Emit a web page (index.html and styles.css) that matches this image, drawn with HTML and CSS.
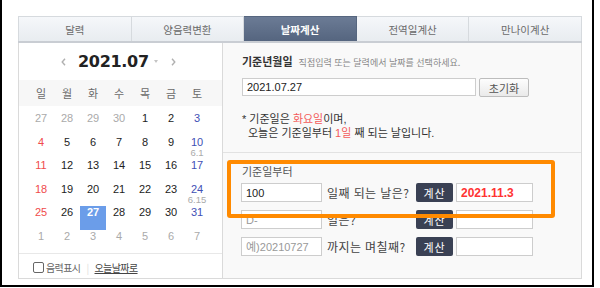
FILE: index.html
```html
<!DOCTYPE html>
<html lang="ko">
<head>
<meta charset="utf-8">
<title>날짜계산</title>
<link rel="stylesheet" href="styles.css">
</head>
<body>
<div class="frame">
  <div class="widget">
    <ul class="tabs">
      <li class="tab">달력</li>
      <li class="tab">양음력변환</li>
      <li class="tab active">날짜계산</li>
      <li class="tab">전역일계산</li>
      <li class="tab">만나이계산</li>
    </ul>
    <div class="body">
      <div class="cal">
        <div class="cal-head">
          <svg class="arrow" width="5" height="8" viewBox="0 0 5 8"><path d="M4 0.8 L1.2 4 L4 7.2" fill="none" stroke="#b0b0b0" stroke-width="1.4"/></svg>
          <span class="ym">2021.07</span>
          <svg class="caret" width="4" height="3" viewBox="0 0 4 3"><path d="M0 0 H4 L2 3 Z" fill="#c4c4c4"/></svg>
          <svg class="arrow" width="5" height="8" viewBox="0 0 5 8"><path d="M1 0.8 L3.8 4 L1 7.2" fill="none" stroke="#b0b0b0" stroke-width="1.4"/></svg>
        </div>
        <div class="weekdays">
          <span>일</span><span>월</span><span>화</span><span>수</span><span>목</span><span>금</span><span>토</span>
        </div>
        <div class="dates">
          <div class="d other">27</div><div class="d other">28</div><div class="d other">29</div><div class="d other">30</div><div class="d">1</div><div class="d">2</div><div class="d sat">3</div>
          <div class="d sun">4</div><div class="d">5</div><div class="d">6</div><div class="d">7</div><div class="d">8</div><div class="d">9</div><div class="d sat">10<small>6.1</small></div>
          <div class="d sun">11</div><div class="d">12</div><div class="d">13</div><div class="d">14</div><div class="d">15</div><div class="d">16</div><div class="d sat">17</div>
          <div class="d sun">18</div><div class="d">19</div><div class="d">20</div><div class="d">21</div><div class="d">22</div><div class="d">23</div><div class="d sat">24<small>6.15</small></div>
          <div class="d sun">25</div><div class="d">26</div><div class="d sel">27</div><div class="d">28</div><div class="d">29</div><div class="d">30</div><div class="d sat">31</div>
          <div class="d other">1</div><div class="d other">2</div><div class="d other">3</div><div class="d other">4</div><div class="d other">5</div><div class="d other">6</div><div class="d other">7</div>
        </div>
        <div class="cal-foot">
          <span class="check"></span><span class="lunar">음력표시</span>
          <span class="sep">|</span>
          <span class="today">오늘날짜로</span>
        </div>
      </div>
      <div class="calc">
        <div class="base">
          <div class="base-title"><strong>기준년월일</strong><span class="hint">직접입력 또는 달력에서 날짜를 선택하세요.</span></div>
          <div class="base-row">
            <input class="date-input" type="text" value="2021.07.27">
            <button class="btn-reset" type="button">초기화</button>
          </div>
          <p class="note">
            <span class="line">* 기준일은 <em>화요일</em>이며,</span>
            <span class="line indent">오늘은 기준일부터 <em>1일</em> 째 되는 날입니다.</span>
          </p>
        </div>
        <div class="calc-rows">
          <div class="calc-label">기준일부터</div>
          <div class="calc-row">
            <input class="num" type="text" value="100">
            <span class="txt">일째 되는 날은?</span>
            <button class="btn-calc" type="button">계산</button>
            <input class="result hit" type="text" value="2021.11.3">
          </div>
          <div class="calc-row">
            <input class="num" type="text" placeholder="D-">
            <span class="txt">일은?</span>
            <button class="btn-calc" type="button">계산</button>
            <input class="result" type="text">
          </div>
          <div class="calc-row">
            <input class="num" type="text" placeholder="예)20210727">
            <span class="txt">까지는 며칠째?</span>
            <button class="btn-calc" type="button">계산</button>
            <input class="result" type="text">
          </div>
        </div>
        <div class="highlight"></div>
      </div>
    </div>
  </div>
</div>
</body>
</html>
```
FILE: styles.css
```css
* { box-sizing: border-box; }

body {
  margin: 0;
  background: #fff;
  font-family: "Noto Sans CJK KR", "Liberation Sans", sans-serif;
  color: #333;
}

.frame {
  width: 594px;
  height: 287px;
  border: 2px solid #000;
  border-top: 0;
  padding: 16px 0 0 16px;
}

.widget {
  width: 564px;
}

/* tabs */
.tabs {
  display: flex;
  margin: 0;
  padding: 0;
  list-style: none;
  height: 27px;
  border-bottom: 2px solid #c9cdd3;
}

.tab {
  flex: 1;
  border-top: 1px solid #d6dade;
  border-right: 1px solid #d6dade;
  background: linear-gradient(#f5f7fa, #e8ecf0);
  text-align: center;
  font-size: 10.5px;
  line-height: 25px;
  color: #6a6a6a;
}

.tab:first-child {
  border-left: 1px solid #d6dade;
}

.tab.active {
  background: linear-gradient(#6b7b95, #55657f);
  border-color: #56667f;
  color: #fff;
  font-weight: bold;
}

.body {
  display: flex;
  height: 236px;
  border-bottom: 1px solid #dadada;
}

/* calendar */
.cal {
  width: 205px;
  border-left: 1px solid #dadada;
  border-right: 1px solid #dadada;
  background: #fff;
  display: flex;
  flex-direction: column;
}

.cal-head {
  height: 37px;
  display: flex;
  align-items: center;
  padding-left: 42px;
}

.ym {
  font-family: "DejaVu Sans", "Liberation Sans", sans-serif;
  font-weight: bold;
  font-size: 16px;
  letter-spacing: -0.3px;
  color: #222;
  margin: 0 5px 0 12px;
}

.caret {
  margin-right: 13px;
}

.weekdays {
  display: grid;
  grid-template-columns: repeat(7, 1fr);
  align-items: center;
  height: 26px;
  background: #f7f7f7;
  padding: 0 12px 0 9px;
  font-size: 11px;
  color: #6a6a6a;
  text-align: center;
}

.dates {
  display: grid;
  grid-template-columns: repeat(7, 1fr);
  grid-auto-rows: 23.5px;
  padding: 6px 12px 0 9px;
}

.d {
  font-family: "Liberation Sans", sans-serif;
  font-size: 11px;
  line-height: 12px;
  text-align: center;
  color: #222;
}

.d small {
  display: block;
  font-size: 9.5px;
  line-height: 10px;
  color: #aaa;
}

.d.sun { color: #f04b4b; }
.d.sat { color: #4150b5; }
.d.other { color: #aaa; }

.d.sel {
  background: #6b9de9;
  color: #fff;
  font-weight: bold;
}

.cal-foot {
  flex: 1;
  border-top: 1px solid #e8e8e8;
  display: flex;
  align-items: center;
  padding: 2px 0 0 14px;
  font-size: 10px;
  letter-spacing: -0.6px;
  color: #666;
}

.check {
  width: 11px;
  height: 11px;
  border: 1px solid #666;
  border-radius: 2px;
  background: #fff;
  margin-right: 2px;
}

.sep {
  color: #ddd;
  margin: 0 6px 0 6px;
}

.today {
  color: #444;
  text-decoration: underline;
}

/* calculator */
.calc {
  flex: 1;
  position: relative;
  background: #f9f9f9;
  border-right: 1px solid #dadada;
}

.base {
  height: 110px;
  padding: 11px 0 0 19px;
  border-bottom: 1px solid #e2e2e2;
}

.base-title {
  line-height: 14px;
  display: flex;
  align-items: baseline;
}

.base-title strong {
  font-size: 11px;
  color: #333;
}

.hint {
  margin-left: 6px;
  font-size: 9px;
  color: #888;
}

.base-row {
  margin-top: 8px;
  display: flex;
}

input {
  font-family: "Liberation Sans", "Noto Sans CJK KR", sans-serif;
  font-size: 11px;
  color: #222;
  border: 1px solid #cdcdcd;
  background: #fff;
  padding: 0 4px;
  margin: 0;
  outline: none;
}

input::placeholder {
  color: #999;
}

.date-input {
  width: 234px;
  height: 18px;
}

button {
  font-family: "Noto Sans CJK KR", sans-serif;
  padding: 0;
  margin: 0;
}

.btn-reset {
  margin-left: 3px;
  width: 50px;
  height: 19px;
  border: 1px solid #bdbdbd;
  border-radius: 2px;
  background: linear-gradient(#fdfdfd, #eaeaea);
  font-size: 11px;
  color: #555;
}

.note {
  margin: 15px 0 0;
  font-family: "Liberation Sans", "Noto Sans CJK KR", sans-serif;
  font-size: 11px;
  line-height: 14px;
  color: #333;
}

.note .line {
  display: block;
  height: 14px;
}

.note .indent {
  padding-left: 6px;
}

.note em {
  font-style: normal;
  color: #f45b5b;
}

.calc-rows {
  padding: 12px 0 0 18px;
}

.calc-label {
  padding-left: 1px;
  font-size: 11px;
  line-height: 13px;
  color: #555;
  margin-bottom: 5px;
}

.calc-row {
  display: flex;
  align-items: center;
  height: 19px;
  margin-bottom: 8px;
}

.num {
  width: 81px;
  height: 19px;
}

.txt {
  width: 94px;
  padding-left: 5px;
  font-size: 12px;
  letter-spacing: 0.4px;
  color: #444;
  white-space: nowrap;
}

.btn-calc {
  width: 37px;
  height: 19px;
  border: 0;
  border-radius: 2px;
  background: #3a4154;
  color: #fff;
  font-size: 11px;
  letter-spacing: 1px;
}

.result {
  margin-left: 3px;
  width: 77px;
  height: 19px;
}

.result.hit {
  color: #f33;
  font-weight: bold;
  font-size: 12px;
}

.highlight {
  position: absolute;
  left: 4px;
  top: 117px;
  width: 328px;
  height: 58px;
  border: 4px solid #ff8a00;
  border-radius: 3px;
  pointer-events: none;
}
```
